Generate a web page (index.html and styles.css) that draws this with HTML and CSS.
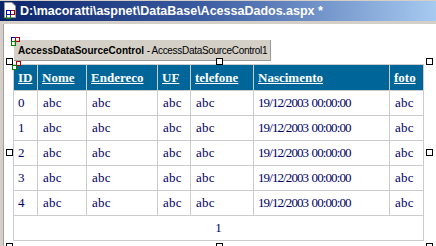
FILE: index.html
```html
<!DOCTYPE html>
<html lang="pt">
<head>
    <meta charset="UTF-8">
    <title>AcessaDados.aspx</title>
    <link rel="stylesheet" href="styles.css">
</head>
<body>
    <div class="window">
        <div class="titlebar">
            <svg class="doc-icon" width="16" height="18" viewBox="0 0 16 18">
                <path d="M1.5 0.5 H9 L12.5 4 V15.5 H1.5 Z" fill="#fff" stroke="#9a9a9a"/>
                <rect x="7.5" y="8.5" width="4" height="4" fill="none" stroke="#b00000"/>
                <rect x="3.5" y="12.5" width="4" height="4" fill="none" stroke="#008000"/>
                <rect x="3.5" y="8.5" width="4" height="4" fill="none" stroke="#0000c0"/>
            </svg>
            <span class="title">D:\macoratti\aspnet\DataBase\AcessaDados.aspx *</span>
        </div>

        <div class="editor">
            <svg class="glyph tag-glyph" width="10" height="10" viewBox="0 0 10 10">
                <rect x="0.5" y="0.5" width="4" height="4" fill="none" stroke="#0000c0"/>
                <rect x="4.5" y="0.5" width="4" height="4" fill="none" stroke="#b00000"/>
                <rect x="0.5" y="4.5" width="4" height="4" fill="none" stroke="#008000"/>
            </svg>

            <div class="tag">
                <b>AccessDataSourceControl</b> - AccessDataSourceControl1
            </div>

            <div class="grid-wrap">
                <svg class="glyph grid-glyph" width="10" height="10" viewBox="0 0 10 10">
                    <rect x="4.5" y="0.5" width="4" height="4" fill="#fff" stroke="#b00000"/>
                    <rect x="0.5" y="4.5" width="4" height="4" fill="#fff" stroke="#008000"/>
                </svg>
                <table class="grid">
                    <colgroup>
                        <col style="width:24px">
                        <col style="width:49px">
                        <col style="width:71px">
                        <col style="width:33px">
                        <col style="width:63px">
                        <col style="width:136px">
                        <col style="width:34px">
                    </colgroup>
                    <thead>
                        <tr>
                            <th><a>ID</a></th>
                            <th><a>Nome</a></th>
                            <th><a>Endereco</a></th>
                            <th><a>UF</a></th>
                            <th><a>telefone</a></th>
                            <th><a>Nascimento</a></th>
                            <th><a>foto</a></th>
                        </tr>
                    </thead>
                    <tbody>
                        <tr><td>0</td><td class="abc">abc</td><td class="abc">abc</td><td class="abc">abc</td><td class="abc">abc</td><td class="date">19/12/2003 00:00:00</td><td class="abc">abc</td></tr>
                        <tr><td>1</td><td class="abc">abc</td><td class="abc">abc</td><td class="abc">abc</td><td class="abc">abc</td><td class="date">19/12/2003 00:00:00</td><td class="abc">abc</td></tr>
                        <tr><td>2</td><td class="abc">abc</td><td class="abc">abc</td><td class="abc">abc</td><td class="abc">abc</td><td class="date">19/12/2003 00:00:00</td><td class="abc">abc</td></tr>
                        <tr><td>3</td><td class="abc">abc</td><td class="abc">abc</td><td class="abc">abc</td><td class="abc">abc</td><td class="date">19/12/2003 00:00:00</td><td class="abc">abc</td></tr>
                        <tr><td>4</td><td class="abc">abc</td><td class="abc">abc</td><td class="abc">abc</td><td class="abc">abc</td><td class="date">19/12/2003 00:00:00</td><td class="abc">abc</td></tr>
                        <tr class="pager"><td colspan="7">1</td></tr>
                    </tbody>
                </table>
            </div>

            <!-- alças de seleção do controle -->
            <span class="handle h-tl"></span>
            <span class="handle h-tc"></span>
            <span class="handle h-tr"></span>
            <span class="handle h-ml"></span>
            <span class="handle h-mr"></span>
            <span class="handle h-bl"></span>
            <span class="handle h-bc"></span>
            <span class="handle h-br"></span>
        </div>
    </div>
</body>
</html>
```

FILE: styles.css
```css
body {
    margin: 0;
    background-color: #fff;
    font-family: "Liberation Serif", serif;
}
.window {
    width: 436px;
    height: 246px;
    overflow: hidden;
    display: flex;
    flex-direction: column;
}
.titlebar {
    height: 20px;
    border-top: 1px solid #d4d0c8;
    border-bottom: 3px solid #d4d0c8;
    background: linear-gradient(to right, #0a246a, #3a5aa0 45%, #a6caf0);
    display: flex;
    align-items: center;
    padding-left: 3px;
    gap: 1px;
}
.doc-icon {
    flex: none;
}
.title {
    color: #fff;
    font-family: "Liberation Sans", Arial, sans-serif;
    font-weight: bold;
    font-size: 12.5px;
    white-space: nowrap;
}
.editor {
    position: relative;
    flex: 1;
    border-left: 3px solid #d4d0c8;
    box-shadow: inset 1px 0 0 #a0a0a0;
    padding: 16px 0 0 10px;
}
.glyph {
    position: absolute;
    display: block;
}
.tag-glyph {
    left: 8px;
    top: 13px;
}
.tag {
    width: 257px;
    height: 21px;
    margin-left: 1px;
    padding: 2px 0 0 4px;
    box-sizing: border-box;
    background-color: #d4d0c8;
    border-right: 1px solid #9a9a9a;
    border-bottom: 1px solid #9a9a9a;
    font-family: "Liberation Sans", Arial, sans-serif;
    font-size: 10px;
    line-height: 18px;
    letter-spacing: -0.3px;
    color: #000;
    white-space: nowrap;
}
.tag b {
    letter-spacing: 0;
}
.grid-wrap {
    position: relative;
    margin-top: 3px;
}
.grid-glyph {
    left: -1px;
    top: -3px;
}
.grid {
    border-collapse: collapse;
    table-layout: fixed;
    width: 410px;
    font-size: 13px;
    color: #000066;
}
.grid th,
.grid td {
    border: 1px solid #cccccc;
    padding: 0 0 0 4px;
    text-align: left;
    white-space: nowrap;
    overflow: hidden;
}
.grid th {
    background-color: #006699;
    height: 25px;
    color: #fff;
    font-weight: bold;
}
.grid th a {
    text-decoration: underline;
}
.grid td {
    height: 24px;
}
.grid td.abc {
    padding-left: 5px;
    letter-spacing: 0.3px;
}
.grid td.date {
    letter-spacing: -0.9px;
    word-spacing: 1px;
}
.grid .pager td {
    text-align: center;
    padding-left: 0;
}
.handle {
    position: absolute;
    width: 5px;
    height: 5px;
    background-color: #fff;
    border: 1px solid #000;
}
.h-tl { left: 3px;   top: 34px; }
.h-tc { left: 213px; top: 34px; }
.h-tr { left: 423px; top: 34px; }
.h-ml { left: 3px;   top: 125px; }
.h-mr { left: 423px; top: 125px; }
.h-bl { left: 3px;   top: 219px; }
.h-bc { left: 213px; top: 219px; }
.h-br { left: 423px; top: 219px; }
```
